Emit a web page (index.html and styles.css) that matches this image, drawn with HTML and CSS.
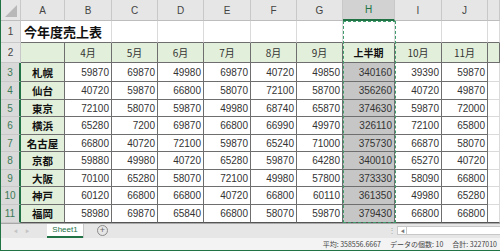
FILE: index.html
```html
<!DOCTYPE html>
<html lang="ja">
<head>
    <meta charset="UTF-8">
    <title>今年度売上表 - Excel</title>
    <link rel="stylesheet" href="styles.css">
</head>
<body>
<div class="window">
    <div class="sheet">
        <div class="row head">
            <div class="hd corner"><span class="tri"></span></div>
            <div class="hd">A</div><div class="hd">B</div><div class="hd">C</div><div class="hd">D</div>
            <div class="hd">E</div><div class="hd">F</div><div class="hd">G</div><div class="hd hd-sel">H</div>
            <div class="hd">I</div><div class="hd">J</div><div class="hd"></div>
        </div>
        <div class="row r1">
            <div class="rn">1</div>
            <div class="c top title">今年度売上表</div><div class="c top"></div><div class="c top"></div><div class="c top"></div>
            <div class="c top"></div><div class="c top"></div><div class="c top"></div><div class="c top"></div>
            <div class="c top"></div><div class="c top"></div><div class="c top"></div>
        </div>
        <div class="row r2">
            <div class="rn">2</div>
            <div class="c t g"></div><div class="c t g m">4月</div><div class="c t g m">5月</div><div class="c t g m">6月</div>
            <div class="c t g m">7月</div><div class="c t g m">8月</div><div class="c t g m">9月</div><div class="c t g m bold">上半期</div>
            <div class="c t g m">10月</div><div class="c t g m">11月</div><div class="c t g"></div>
        </div>
        <div class="row h19">
            <div class="rn sel">3</div>
            <div class="c t g city">札幌</div><div class="c t n">59870</div><div class="c t n">69870</div><div class="c t n">49980</div>
            <div class="c t n">69870</div><div class="c t n">40720</div><div class="c t n">49850</div><div class="c t n s">340160</div>
            <div class="c t n">39390</div><div class="c t n">59870</div><div class="c"></div>
        </div>
        <div class="row h18">
            <div class="rn sel">4</div>
            <div class="c t g city">仙台</div><div class="c t n">40720</div><div class="c t n">59870</div><div class="c t n">66800</div>
            <div class="c t n">58070</div><div class="c t n">72100</div><div class="c t n">58700</div><div class="c t n s">356260</div>
            <div class="c t n">40720</div><div class="c t n">49870</div><div class="c"></div>
        </div>
        <div class="row h17">
            <div class="rn sel">5</div>
            <div class="c t g city">東京</div><div class="c t n">72100</div><div class="c t n">58070</div><div class="c t n">59870</div>
            <div class="c t n">49980</div><div class="c t n">68740</div><div class="c t n">65870</div><div class="c t n s">374630</div>
            <div class="c t n">59870</div><div class="c t n">72000</div><div class="c"></div>
        </div>
        <div class="row h18">
            <div class="rn sel">6</div>
            <div class="c t g city">横浜</div><div class="c t n">65280</div><div class="c t n">7200</div><div class="c t n">69870</div>
            <div class="c t n">66800</div><div class="c t n">66990</div><div class="c t n">49970</div><div class="c t n s">326110</div>
            <div class="c t n">72100</div><div class="c t n">65800</div><div class="c"></div>
        </div>
        <div class="row h17">
            <div class="rn sel">7</div>
            <div class="c t g city">名古屋</div><div class="c t n">66800</div><div class="c t n">40720</div><div class="c t n">72100</div>
            <div class="c t n">59870</div><div class="c t n">65240</div><div class="c t n">71000</div><div class="c t n s">375730</div>
            <div class="c t n">66870</div><div class="c t n">58070</div><div class="c"></div>
        </div>
        <div class="row h18">
            <div class="rn sel">8</div>
            <div class="c t g city">京都</div><div class="c t n">59880</div><div class="c t n">49980</div><div class="c t n">40720</div>
            <div class="c t n">65280</div><div class="c t n">59870</div><div class="c t n">64280</div><div class="c t n s">340010</div>
            <div class="c t n">65270</div><div class="c t n">40720</div><div class="c"></div>
        </div>
        <div class="row h17">
            <div class="rn sel">9</div>
            <div class="c t g city">大阪</div><div class="c t n">70100</div><div class="c t n">65280</div><div class="c t n">58070</div>
            <div class="c t n">72100</div><div class="c t n">49980</div><div class="c t n">57800</div><div class="c t n s">373330</div>
            <div class="c t n">58090</div><div class="c t n">66800</div><div class="c"></div>
        </div>
        <div class="row h18">
            <div class="rn sel">10</div>
            <div class="c t g city">神戸</div><div class="c t n">60120</div><div class="c t n">66800</div><div class="c t n">66800</div>
            <div class="c t n">40720</div><div class="c t n">66800</div><div class="c t n">60110</div><div class="c t n s">361350</div>
            <div class="c t n">49980</div><div class="c t n">65280</div><div class="c"></div>
        </div>
        <div class="row h18">
            <div class="rn sel">11</div>
            <div class="c t g city">福岡</div><div class="c t n">58980</div><div class="c t n">69870</div><div class="c t n">65840</div>
            <div class="c t n">66800</div><div class="c t n">58070</div><div class="c t n">59870</div><div class="c t n s">379430</div>
            <div class="c t n">66800</div><div class="c t n">66800</div><div class="c"></div>
        </div>

        <!-- copy marquee around column H -->
        <div class="marquee"></div>
    </div>

    <div class="tabbar">
        <div class="nav"><span>◀</span><span>▶</span></div>
        <div class="tab">Sheet1</div>
        <div class="add">+</div>
        <div class="split">⋮</div>
        <div class="hscroll"><span class="arrow">◀</span></div>
    </div>

    <div class="status">
        <span>平均: 358556.6667</span>
        <span>データの個数: 10</span>
        <span>合計: 3227010</span>
    </div>
</div>
</body>
</html>
```

FILE: styles.css
```css
* { margin: 0; padding: 0; box-sizing: border-box; }
body {
    width: 500px;
    height: 251px;
    overflow: hidden;
    background: #fff;
    color: #222;
    font-family: "Noto Sans CJK JP", "Liberation Sans", sans-serif;
}
.window {
    height: 251px;
    border-left: 1px solid #217346;
    border-bottom: 1px solid #217346;
    display: flex;
    flex-direction: column;
}
.sheet { height: 223px; overflow: hidden; position: relative; }

.row {
    display: grid;
    grid-template-columns: 20px 44px 47px 46px 46px 47px 46px 46px 52px 47px 46px 1fr;
}
.head { height: 21px; }
.r1 { height: 22px; }
.r2 { height: 20px; }
.h19 { height: 19px; }
.h18 { height: 18px; }
.h17 { height: 17px; }

/* headers */
.hd, .rn {
    background: #e6e6e6;
    color: #444;
    font-family: "Liberation Sans", sans-serif;
    font-size: 10px;
    display: flex;
    align-items: center;
    justify-content: center;
    border-right: 1px solid #c8c8c8;
    border-bottom: 1px solid #c8c8c8;
}
.hd { border-bottom-color: #bdbdbd; }
.hd-sel { background: #d2d2d2; color: #217346; border-bottom: 2px solid #217346; }
.rn.sel { background: #d9d9d9; color: #3d7a58; border-right: 2px solid #217346; }
.corner { position: relative; }
.tri {
    position: absolute;
    right: 3px;
    bottom: 3px;
    border-left: 12px solid transparent;
    border-bottom: 12px solid #b8b8b8;
}

/* cells */
.c {
    border-right: 1px solid #dadada;
    border-bottom: 1px solid #dadada;
    font-size: 10px;
    display: flex;
    align-items: center;
    white-space: nowrap;
    overflow: visible;
}
.top { border-bottom-color: #6e6e6e; }
.title {
    font-size: 13px;
    font-weight: bold;
    color: #111;
    padding-left: 3px;
    border-right: none;
    position: relative;
    z-index: 1;
}
.t { border-right-color: #6e6e6e; border-bottom-color: #6e6e6e; }
.g { background: #e2efda; }
.m { justify-content: center; color: #333; }
.bold { font-weight: bold; color: #111; }
.city { justify-content: center; font-weight: bold; color: #111; font-size: 10.5px; }
.n {
    justify-content: flex-end;
    padding-right: 2px;
    font-family: "Liberation Sans", "Noto Sans CJK JP", sans-serif;
    font-size: 10px;
    color: #333;
}
.s { background: #c6c6c6; }
.h18:last-of-type .c, .row:nth-last-child(2) .c { border-bottom: 1px solid #555; }

.marquee {
    position: absolute;
    left: 342px;
    top: 21px;
    width: 53px;
    height: 202px;
    border: 1px dashed #3f9a6c;
    pointer-events: none;
}

/* sheet tabs and scrollbar */
.tabbar {
    height: 15px;
    background: #e6e6e6;
    border-top: 1px solid #a8a8a8;
    display: flex;
    align-items: stretch;
    font-family: "Liberation Sans", sans-serif;
}
.nav {
    width: 46px;
    display: flex;
    gap: 7px;
    padding-left: 12px;
    align-items: center;
    font-size: 5px;
    color: #c4c4c4;
}
.tab {
    width: 36px;
    background: #fff;
    color: #217346;
    font-size: 8px;
    text-align: center;
    line-height: 12px;
    border-bottom: 2px solid #217346;
    box-shadow: 1px 0 0 #c8c8c8;
}
.add {
    width: 11px;
    height: 11px;
    margin: 1px 0 0 14px;
    border: 1px solid #8a8a8a;
    border-radius: 50%;
    color: #666;
    font-size: 9px;
    line-height: 8px;
    text-align: center;
}
.split {
    margin-left: auto;
    width: 10px;
    color: #aaa;
    font-size: 8px;
    line-height: 14px;
    text-align: center;
}
.hscroll {
    width: 103px;
    margin: 2px 0 3px;
    background: #fff;
    border: 1px solid #c8c8c8;
    border-right: none;
    display: flex;
    align-items: center;
}
.arrow {
    width: 9px;
    height: 100%;
    border-right: 1px solid #c8c8c8;
    font-size: 5px;
    color: #777;
    text-align: center;
    line-height: 8px;
}

.status {
    flex: 1;
    background: #f3f3f3;
    display: flex;
    justify-content: flex-end;
    align-items: center;
    gap: 9px;
    padding-right: 3px;
    font-size: 7px;
    color: #444;
}
```
